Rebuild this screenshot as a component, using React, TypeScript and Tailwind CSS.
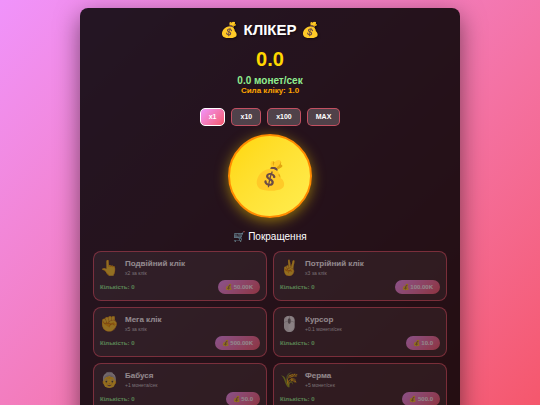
import React, { useState } from "react";

interface Upgrade {
  icon: string;
  name: string;
  description: string;
  count: number;
  price: string;
}

const upgrades: Upgrade[] = [
  { icon: "👆", name: "Подвійний клік", description: "x2 за клік", count: 0, price: "50.00K" },
  { icon: "✌️", name: "Потрійний клік", description: "x3 за клік", count: 0, price: "100.00K" },
  { icon: "✊", name: "Мега клік", description: "x5 за клік", count: 0, price: "500.00K" },
  { icon: "🖱️", name: "Курсор", description: "+0.1 монети/сек", count: 0, price: "10.0" },
  { icon: "👵", name: "Бабуся", description: "+1 монета/сек", count: 0, price: "50.0" },
  { icon: "🌾", name: "Ферма", description: "+5 монет/сек", count: 0, price: "500.0" },
];

const amounts = ["x1", "x10", "x100", "MAX"];

function UpgradeCard({ upgrade }: { upgrade: Upgrade }) {
  return (
    <div className="rounded-lg border border-[#f5576c]/80 bg-white/10 p-1.5 opacity-50">
      <div className="flex h-5 items-center gap-[5px]">
        <span className="flex w-5 justify-center pr-0.5 text-[15px] leading-5">{upgrade.icon}</span>
        <div>
          <h3 className="text-[8px] leading-[11px] font-bold">{upgrade.name}</h3>
          <p className="text-[5px] leading-[9px] text-[#cccccc]">{upgrade.description}</p>
        </div>
      </div>
      <div className="mt-0.5 flex h-[14px] items-center justify-between">
        <span className="text-[6px] font-bold text-[#90ee90]">Кількість: {upgrade.count}</span>
        <button
          disabled
          className="h-[14px] rounded-full bg-linear-135 from-[#f093fb] to-[#f5576c] px-[7px] text-[6px] leading-[14px] font-bold"
        >
          💰 {upgrade.price}
        </button>
      </div>
    </div>
  );
}

export default function App() {
  const [coins, setCoins] = useState(0);
  const [amount, setAmount] = useState("x1");

  return (
    <div className="min-h-screen bg-linear-135 from-[#f093fb] to-[#f5576c] bg-fixed px-5 py-2 font-['Liberation_Sans',Arial,sans-serif] text-white">
      <main className="mx-auto max-w-[380px] rounded-lg bg-black/85 px-[13px] pt-3 pb-3 shadow-[0_8px_25px_rgba(0,0,0,0.5)]">
        <header className="text-center">
          <h1 className="text-[15px] leading-5 font-bold [text-shadow:1px_1px_2px_rgba(0,0,0,0.5)]">💰 КЛІКЕР 💰</h1>
          <div className="mt-[7px] text-[20px] leading-6 font-bold text-[#ffd700]">{coins.toFixed(1)}</div>
          <div className="mt-1 text-[10px] leading-3 font-bold text-[#90ee90]">0.0 монет/сек</div>
          <div className="text-[8px] leading-2 font-bold text-[#ffa500]">Сила кліку: 1.0</div>
        </header>

        <div className="mt-[13px] flex justify-center gap-1.5">
          {amounts.map((item) => (
            <button
              key={item}
              onClick={() => setAmount(item)}
              className={`h-[18px] rounded-[5px] border px-2 text-[7px] font-bold ${
                item === amount
                  ? "border-white bg-linear-135 from-[#f093fb] to-[#f5576c]"
                  : "border-[#f5576c]/70 bg-white/20"
              }`}
            >
              {item}
            </button>
          ))}
        </div>

        <button
          onClick={() => setCoins(coins + 1)}
          aria-label="Клік"
          className="mx-auto mt-2 flex size-[84px] items-center justify-center rounded-full border-2 border-[#ff8c00] bg-linear-135 from-[#ffd700] to-[#ffed4e] text-[28px] shadow-[0_3px_13px_rgba(255,215,0,0.5)]"
        >
          💰
        </button>

        <section className="mt-[13px]">
          <h2 className="text-center text-[10px] leading-3">🛒 Покращення</h2>
          <div className="mt-2 grid grid-cols-2 gap-1.5">
            {upgrades.map((upgrade) => (
              <UpgradeCard key={upgrade.name} upgrade={upgrade} />
            ))}
          </div>
        </section>
      </main>
    </div>
  );
}
